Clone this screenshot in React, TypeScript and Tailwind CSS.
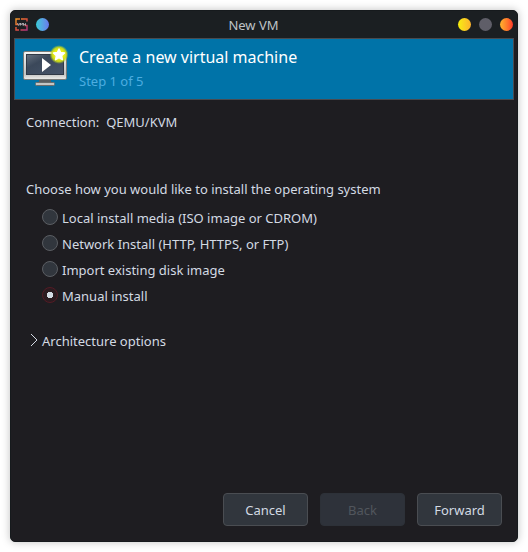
import { useState } from "react";

const installMethods = [
  { id: "local", label: "Local install media (ISO image or CDROM)" },
  { id: "network", label: "Network Install (HTTP, HTTPS, or FTP)" },
  { id: "import", label: "Import existing disk image" },
  { id: "manual", label: "Manual install" },
];

function AppLogo() {
  return (
    <svg width="13" height="13" viewBox="0 0 13 13" fill="none" aria-hidden="true">
      <defs>
        <linearGradient id="logo" gradientUnits="userSpaceOnUse" x1="0" y1="0" x2="13" y2="13">
          <stop offset="0" stopColor="#f6a623" />
          <stop offset="0.5" stopColor="#e0503c" />
          <stop offset="1" stopColor="#a8328a" />
        </linearGradient>
      </defs>
      <path d="M5 1H1v5.500h2M6 1h6v2.500M1 9v3h3M5.500 12H12V7.500H9.500" stroke="url(#logo)" strokeWidth="1.400" />
      <path d="M2.500 5l1.200 2.500L5 5M5.500 7.500V5l1.200 1.600L8 5v2.500M8.500 7.500V5.500l1 1 1-1v2" stroke="#b9b4ba" strokeWidth="0.900" />
    </svg>
  );
}

function MachineIcon() {
  return (
    <svg width="48" height="44" viewBox="0 0 48 44" aria-hidden="true">
      <defs>
        <linearGradient id="frame" x1="0" y1="0" x2="0" y2="1">
          <stop offset="0" stopColor="#f4f4f3" />
          <stop offset="0.8" stopColor="#c2c3c2" />
          <stop offset="1" stopColor="#eeeeec" />
        </linearGradient>
        <linearGradient id="screen" x1="0" y1="0" x2="1" y2="1">
          <stop offset="0" stopColor="#66717f" />
          <stop offset="0.35" stopColor="#3b485a" />
          <stop offset="1" stopColor="#46546a" />
        </linearGradient>
        <radialGradient id="glow">
          <stop offset="0.5" stopColor="#eef012" />
          <stop offset="0.75" stopColor="#d0df16" stopOpacity="0.9" />
          <stop offset="1" stopColor="#9fc52c" stopOpacity="0" />
        </radialGradient>
      </defs>
      <path d="M16.500 34h11l1 4h-13z" fill="#5a5d60" />
      <rect x="12.500" y="37.500" width="19" height="3" rx="1" fill="#c4c5c4" stroke="#696c6c" />
      <rect x="0.500" y="6.500" width="43" height="28" rx="1.500" fill="url(#frame)" stroke="#777a78" />
      <rect x="3.500" y="9.500" width="37" height="20" fill="url(#screen)" stroke="#303946" />
      <path d="M19 13v14l9-7z" fill="#fff" />
      <circle cx="36" cy="9.500" r="9.500" fill="url(#glow)" />
      <path d="M36 4l1.600 3.600 3.900.4-2.900 2.700.8 3.900-3.400-2-3.400 2 .8-3.900L30.500 8l3.900-.4z" fill="#fff" stroke="#fff" strokeWidth="1.500" strokeLinejoin="round" />
    </svg>
  );
}

function TitleBar() {
  return (
    <header className="flex h-[27px] shrink-0 items-center bg-[#1b1f22] pr-1 pl-1">
      <div className="flex items-center gap-2">
        <AppLogo />
        <button type="button" aria-label="Keep on all desktops" className="size-[13px] rounded-full bg-linear-to-r from-[#35cbd7] to-[#6878ec]" />
      </div>
      <h1 className="grow text-center text-[13px] leading-5 text-[#bfc3c7]">New VM</h1>
      <div className="flex items-center justify-end gap-2">
        <button type="button" aria-label="Minimize" className="size-[13px] rounded-full bg-linear-to-r from-[#f6ef08] to-[#fdb12b]" />
        <button type="button" aria-label="Maximize" className="size-[13px] rounded-full bg-[#5f5e68]" />
        <button type="button" aria-label="Close" className="size-[13px] rounded-full bg-linear-to-r from-[#fdb32d] to-[#ff3329]" />
      </div>
    </header>
  );
}

const buttonClass =
  "h-[33px] w-[85px] rounded border border-[#4a4d52] bg-[#31363d] text-[13px] leading-5 text-[#d3dae3] disabled:border-[#2d3138] disabled:bg-[#2e323a] disabled:text-[#51565d]";

export default function App() {
  const [method, setMethod] = useState("manual");

  return (
    <div className="flex min-h-screen flex-col bg-white p-[10px] font-['Noto_Sans',sans-serif] text-[13px] leading-5 text-[#d3dae3]">
      <main className="flex grow flex-col overflow-hidden rounded-[5px] border border-[#161a1d] bg-[#1e1d21] shadow-[0_0_8px_rgba(0,0,0,0.25)]">
        <TitleBar />
        <section className="mx-[3px] flex h-[62px] shrink-0 items-start gap-2 border border-[#494b50] bg-[#0073a8] pt-[6px] pl-2">
          <MachineIcon />
          <div>
            <h2 className="text-base leading-6 text-white">Create a new virtual machine</h2>
            <p className="leading-6 text-[#4dade0]">Step 1 of 5</p>
          </div>
        </section>

        <form className="flex grow flex-col px-[15px] pt-3 pb-[15px]" onSubmit={(e) => e.preventDefault()}>
          <dl className="flex gap-[7px]">
            <dt>Connection:</dt>
            <dd>QEMU/KVM</dd>
          </dl>

          <fieldset className="mt-[47px]">
            <legend>Choose how you would like to install the operating system</legend>
            <div className="mt-1.5 flex flex-col pl-4">
              {installMethods.map(({ id, label }) => (
                <label key={id} className="flex h-[26px] items-start gap-1">
                  <input
                    type="radio"
                    name="method"
                    value={id}
                    checked={method === id}
                    onChange={() => setMethod(id)}
                    className="mt-1 size-4 appearance-none rounded-full border border-[#5b5e63] bg-[#31363d] checked:border-[#541b25] checked:bg-[#2b1b20] checked:bg-[radial-gradient(circle,#d3dae3_2px,#d3dae3_3px,transparent_3px)]"
                  />
                  <span className="leading-[26px]">{label}</span>
                </label>
              ))}
            </div>
          </fieldset>

          <button type="button" aria-expanded="false" className="mt-[22px] flex items-start gap-1 self-start pl-1">
            <svg className="mt-0.5" width="8" height="14" viewBox="0 0 8 14" fill="none" stroke="#d3dae3" aria-hidden="true">
              <path d="M1 1l6 6-6 6" />
            </svg>
            Architecture options
          </button>

          <div className="mt-auto flex justify-end gap-3">
            <button type="button" className={buttonClass}>Cancel</button>
            <button type="button" disabled className={buttonClass}>Back</button>
            <button type="submit" className={buttonClass}>Forward</button>
          </div>
        </form>
      </main>
    </div>
  );
}
